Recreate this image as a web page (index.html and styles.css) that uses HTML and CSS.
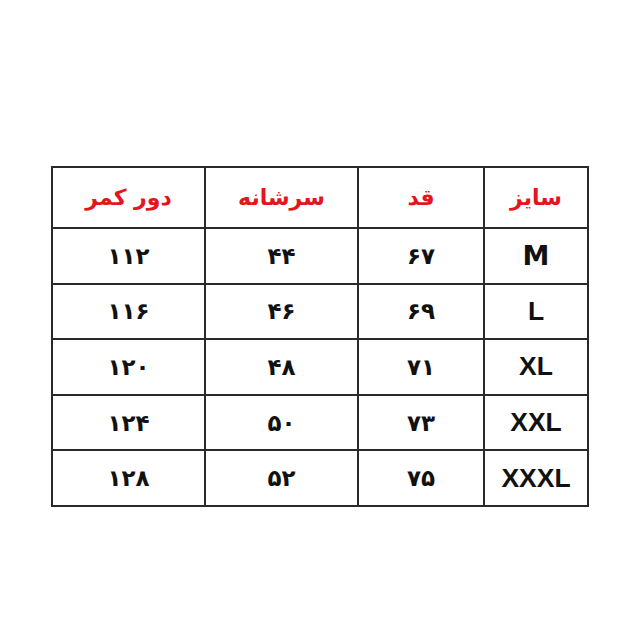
FILE: index.html
```html
<!DOCTYPE html>
<html lang="fa">
<head>
<meta charset="utf-8">
<link rel="stylesheet" href="styles.css">
</head>
<body>
<div class="page">
<table class="sizes" dir="rtl">
<colgroup>
<col class="c-size"><col class="c-len"><col class="c-sh"><col class="c-waist">
</colgroup>
<thead>
<tr><th>سایز</th><th>قد</th><th>سرشانه</th><th>دور کمر</th></tr>
</thead>
<tbody>
<tr><td class="lat wide">M</td><td>۶۷</td><td>۴۴</td><td>۱۱۲</td></tr>
<tr><td class="lat">L</td><td>۶۹</td><td>۴۶</td><td>۱۱۶</td></tr>
<tr><td class="lat">XL</td><td>۷۱</td><td>۴۸</td><td>۱۲۰</td></tr>
<tr><td class="lat">XXL</td><td>۷۳</td><td>۵۰</td><td>۱۲۴</td></tr>
<tr><td class="lat">XXXL</td><td>۷۵</td><td>۵۲</td><td>۱۲۸</td></tr>
</tbody>
</table>
</div>
</body>
</html>
```
FILE: styles.css
```css
html, body {
  margin: 0;
  padding: 0;
  background: #ffffff;
}
.page {
  width: 640px;
  height: 640px;
  padding: 166px 0 0 51px;
  box-sizing: border-box;
}
.sizes {
  border-collapse: collapse;
  table-layout: fixed;
  width: 537px;
  font-family: "DejaVu Sans", "Noto Sans", sans-serif;
  font-weight: 700;
  color: #111111;
}
.c-size { width: 104px; }
.c-len { width: 126px; }
.c-sh { width: 153px; }
.c-waist { width: 153px; }
.sizes th, .sizes td {
  border: 2px solid #2a2a2a;
  text-align: center;
  vertical-align: middle;
  padding: 0;
}
.sizes th {
  height: 59px;
  color: #e3151d;
  font-size: 22px;
  font-weight: 700;
}
.sizes td {
  height: 53.6px;
  font-size: 23px;
  font-weight: 700;
}
.sizes td.lat {
  font-family: "Liberation Sans", Arial, sans-serif;
  font-size: 26.5px;
  font-weight: 700;
}
.sizes td.wide {
  font-family: "DejaVu Sans", sans-serif;
  font-size: 27px;
}
```
